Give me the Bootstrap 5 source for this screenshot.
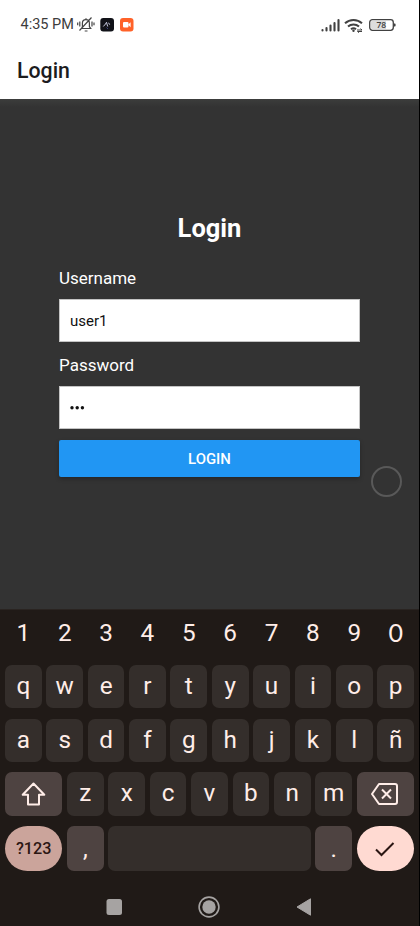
<!DOCTYPE html>
<html lang="en">
<head>
<meta charset="utf-8">
<meta name="viewport" content="width=device-width, initial-scale=1">
<title>Login</title>
<link href="https://cdn.jsdelivr.net/npm/bootstrap@5.3.0/dist/css/bootstrap.min.css" rel="stylesheet">
<style>
body{font-family:Roboto,"Liberation Sans",sans-serif;background:#000;width:420px;height:926px;overflow:hidden}
.phone{width:419px;height:926px;background:#333}
.statusbar{height:50px;padding:0 23px 0 20.5px;color:#3c3c3c}
.clock{font-size:14.5px;line-height:20px;width:56px;white-space:nowrap}
.appbar{height:49px;padding-left:17px;color:#1c1c1e;font-size:21.3px;line-height:42px;font-weight:500}
.top-area{background:#fff;height:99px}
.content-area{height:510px;background:linear-gradient(#3c3d3c,#333 8px);padding:111px 59px 0;color:#fff}
.heading{font-size:25.5px;line-height:36px;font-weight:700;margin:0}
.field-label{font-size:17px;line-height:24px}
.user-label{margin:20px 0 9px}
.pass-label{margin:11px 0 9px}
.field-input{height:43px;min-height:0;border:1px solid #c4c4c4;border-radius:0;padding:0 10px;font-size:15px;color:#111;background:#fff}
.login-btn{height:37.5px;margin-top:10.5px;background:#2196f3;border:0;border-radius:2px;color:#fff;font-size:14.9px;font-weight:500;box-shadow:0 2px 4px #0004;padding:0;line-height:38px}
.touch-ring{left:371px;top:466px;width:31px;height:31px;border:2px solid #595959}
.keyboard{height:317px;background:#201a17;padding:0 5px;color:#ffede8;border-top:1px solid #2a2421}
.key-row{display:grid;grid-template-columns:repeat(10,1fr);column-gap:4.7px;height:43.7px;margin-bottom:10.2px}
.edge-row{grid-template-columns:57.3px repeat(7,1fr) 57.3px}
.space-row{grid-template-columns:57.3px 36.6px 1fr 36.6px 57.3px;height:45px;margin-bottom:0}
.key{background:#342e2b;border-radius:7px;font-size:24.3px;line-height:41px;text-align:center}
.digits{height:44.5px}
.digits .key{background:none;line-height:45px}
.digits .zero{font-family:Lato,sans-serif;font-size:25px}
.alt{background:#4e4341}
.pill{border-radius:23px}
.symbols{background:#cba49b;color:#2b1613;font-size:16.2px;font-weight:500;line-height:45px}
.enter{background:#ffdad2}
.dot-key{line-height:45px}
.navbar-keys{padding:25px 0 0 101px}
.home-key,.back-key{margin-left:76px}
svg{display:block}
</style>
</head>
<body>
<div class="phone position-relative overflow-hidden">
  <header class="top-area">
    <div class="statusbar d-flex align-items-center justify-content-between">
      <div class="d-flex align-items-center">
        <span class="clock">4:35 PM</span>
        <svg width="18" height="16" viewBox="0 0 18 16" fill="none" stroke="#444" stroke-width="1.2"><path d="M4.500 11.500h9.200l-1.300-1.800V6.200a3.500 3.500 0 0 0-7 0v3.500zM7.700 14h2.800M9 2V1.200M14.500 .5 2.500 13.500M2.800 4.500v5M.7 5.500v2.700M15 4.500v5M17 5.500v2.700"/></svg>
        <svg class="ms-1" width="17" height="14" viewBox="0 0 17 14"><rect x="1.300" y="0" width="13.700" height="13.500" rx="3" fill="#111218"/><path d="M4.300 8.500 6.500 6l1-1.700 1.200 4.200M9.500 4.700l1.200 2" stroke="#c8cbe0" stroke-width="1" fill="none"/><path d="M7.500 9.500 9 11" stroke="#3b4380"/></svg>
        <svg class="ms-1" width="14" height="14" viewBox="0 0 14 14"><rect width="13.500" height="13.500" rx="3" fill="#ff6229"/><rect x="3" y="4" width="5.500" height="5.600" rx="1" fill="#fff"/><path d="m8 6.800 2.600-2.500v5z" fill="#fff"/></svg>
      </div>
      <div class="d-flex align-items-center">
        <svg width="19" height="14" viewBox="0 0 19 14" stroke="#414141" stroke-width="2.100" stroke-linecap="round"><path d="M1.500 12v.4M5.500 10v2.400M9.500 7.500v4.900M13.500 5v7.400M17.500 2v10.400"/></svg>
        <svg class="ms-1" width="20" height="15" viewBox="0 0 20 15" fill="none" stroke="#414141" stroke-width="2"><path d="M1 5.300a12.500 12.500 0 0 1 17 0M4 8.500a8.300 8.300 0 0 1 11 0M7 11.200a4 4 0 0 1 5 0"/><circle cx="9.500" cy="12.700" r="1.200" fill="#414141" stroke="none"/><path d="M13 12h5l-1.500-1.400M18 13.500h-4.500l1.400 1.200" stroke-width="1"/></svg>
        <svg class="ms-1" width="28" height="14" viewBox="0 0 28 14"><rect x="1.700" y="1.700" width="23.600" height="10.600" rx="2.700" fill="#fff" stroke="#414141" stroke-width="1.300"/><path d="M4 3h14v8H4a1 1 0 0 1-1-1V4a1 1 0 0 1 1-1z" fill="#ddd"/><path d="M26 5.500h.8a1 1 0 0 1 .8 1v1a1 1 0 0 1-.8 1H26z" fill="#414141"/><text x="13.300" y="10" font-family="Open Sans,sans-serif" font-size="8.500" font-weight="600" text-anchor="middle" fill="#414141">78</text></svg>
      </div>
    </div>
    <div class="appbar">Login</div>
  </header>

  <main class="content-area">
    <h1 class="heading text-center">Login</h1>
    <form>
      <label class="field-label user-label d-block" for="user">Username</label>
      <input class="form-control field-input" id="user" type="text" value="user1">
      <label class="field-label pass-label d-block">Password</label>
      <div class="form-control field-input d-flex align-items-center"><svg width="16" height="6" viewBox="0 0 16 6" fill="#111"><circle cx="2" cy="2.800" r="1.700"/><circle cx="7.200" cy="2.800" r="1.700"/><circle cx="12.400" cy="2.800" r="1.700"/></svg></div>
      <button class="btn login-btn w-100 d-block" type="button">LOGIN</button>
    </form>
  </main>
  <div class="touch-ring position-absolute rounded-circle"></div>

  <section class="keyboard">
    <div class="key-row digits"><div class="key">1</div><div class="key">2</div><div class="key">3</div><div class="key">4</div><div class="key">5</div><div class="key">6</div><div class="key">7</div><div class="key">8</div><div class="key">9</div><div class="key zero">0</div></div>
    <div class="key-row"><div class="key">q</div><div class="key">w</div><div class="key">e</div><div class="key">r</div><div class="key">t</div><div class="key">y</div><div class="key">u</div><div class="key">i</div><div class="key">o</div><div class="key">p</div></div>
    <div class="key-row"><div class="key">a</div><div class="key">s</div><div class="key">d</div><div class="key">f</div><div class="key">g</div><div class="key">h</div><div class="key">j</div><div class="key">k</div><div class="key">l</div><div class="key">ñ</div></div>
    <div class="key-row edge-row">
      <div class="key alt d-flex align-items-center justify-content-center"><svg width="26" height="24" viewBox="0 0 26 24" fill="none" stroke="#ffede8" stroke-width="2" stroke-linejoin="round"><path d="M12.500 1.500 1.700 12.700H7V22.500h11v-9.800h5.300z"/></svg></div>
      <div class="key">z</div><div class="key">x</div><div class="key">c</div><div class="key">v</div><div class="key">b</div><div class="key">n</div><div class="key">m</div>
      <div class="key alt d-flex align-items-center justify-content-center"><svg width="28" height="22" viewBox="0 0 28 22" fill="none" stroke="#ffede8" stroke-width="2" stroke-linejoin="round"><path d="M8 1h16a2 2 0 0 1 2 2v16a2 2 0 0 1-2 2H8L1 11zM11 6.500l9 9M20 6.500l-9 9"/></svg></div>
    </div>
    <div class="key-row space-row">
      <div class="key pill symbols">?123</div>
      <div class="key alt dot-key">,</div>
      <div class="key"></div>
      <div class="key alt dot-key">.</div>
      <div class="key pill enter d-flex align-items-center justify-content-center"><svg width="20" height="16" viewBox="0 0 20 16" fill="none" stroke="#2b1613" stroke-width="2"><path d="m1 8.500 5.500 5.500L18.500 2"/></svg></div>
    </div>
    <div class="navbar-keys d-flex align-items-center">
      <svg width="16" height="16" viewBox="0 0 16 16"><rect x=".5" width="15.500" height="16" rx="2.500" fill="#a6a3a2"/></svg>
      <svg class="home-key" width="22" height="22" viewBox="0 0 22 22"><circle cx="11" cy="11" r="9.900" fill="none" stroke="#a6a3a2" stroke-width="1.600"/><circle cx="11" cy="11" r="6.700" fill="#a6a3a2"/></svg>
      <svg class="back-key" width="16" height="18" viewBox="0 0 16 18"><path d="M14.500.8v16.400L1 9z" fill="#a6a3a2" stroke="#a6a3a2" stroke-linejoin="round"/></svg>
    </div>
  </section>
</div>
<script src="https://cdn.jsdelivr.net/npm/bootstrap@5.3.0/dist/js/bootstrap.bundle.min.js"></script>
</body>
</html>
